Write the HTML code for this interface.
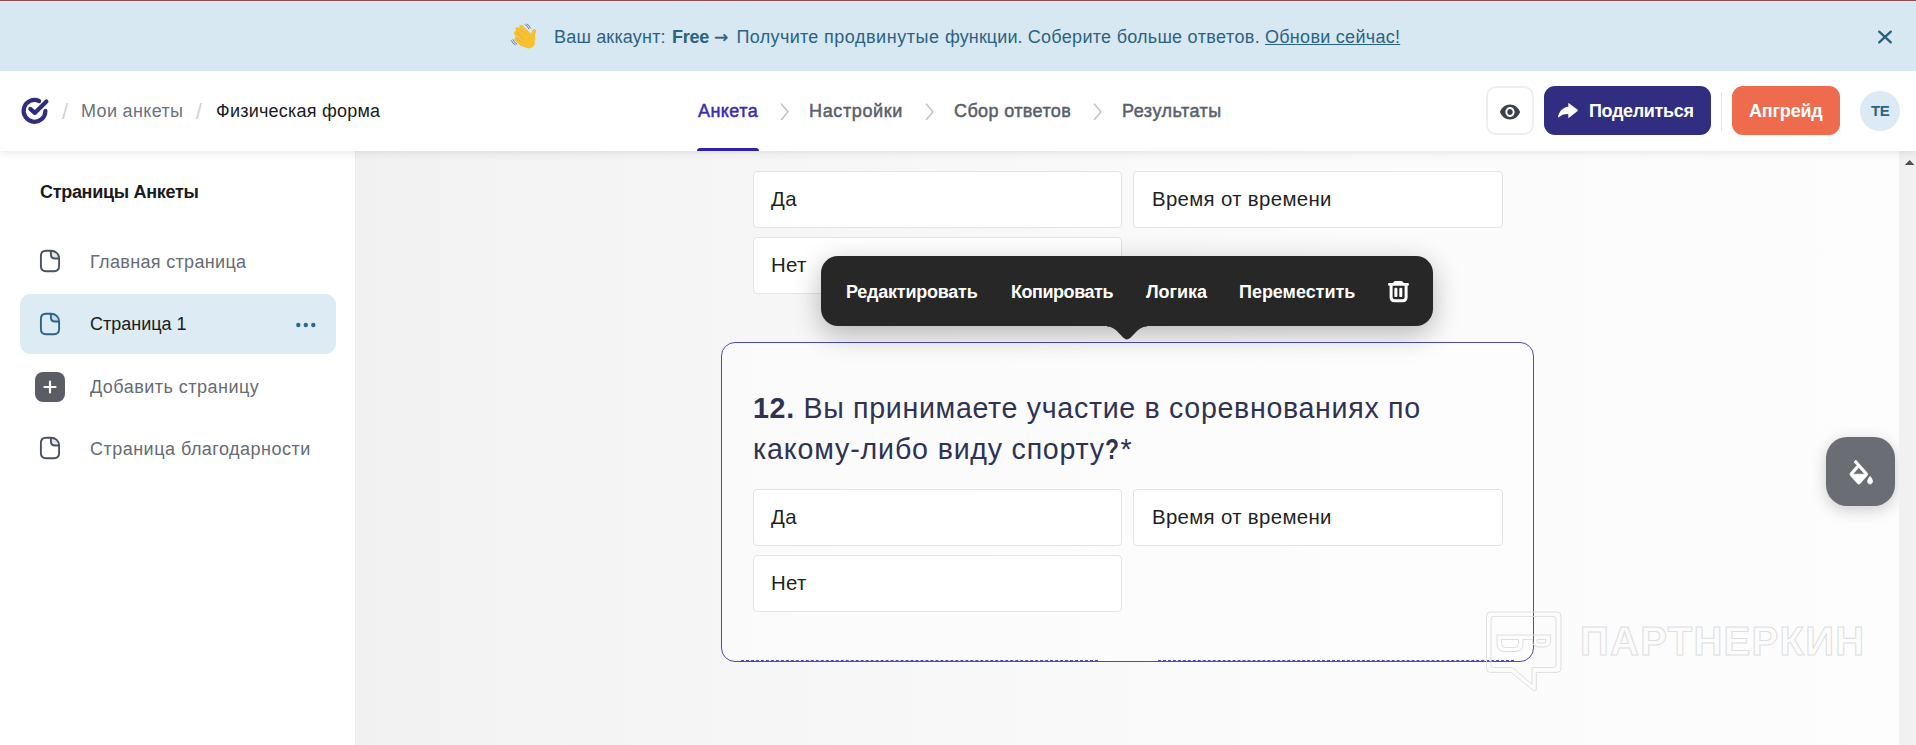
<!DOCTYPE html>
<html lang="ru">
<head>
<meta charset="utf-8">
<title>Физическая форма</title>
<style>
*{box-sizing:border-box;margin:0;padding:0}
html,body{width:1916px;height:745px;overflow:hidden;background:#fff}
body{font-family:"Liberation Sans",sans-serif;color:#1d1d26;position:relative}
.p{white-space:pre!important}.t{position:absolute;white-space:nowrap;line-height:22px;font-size:18px}
svg{position:absolute;overflow:visible}
/* banner */
#banner{position:absolute;left:0;top:0;width:1916px;height:71px;background:linear-gradient(180deg,#854f55 0,#854f55 1px,#fce0e6 1px,#fce0e6 2px,#e2e6ee 2px,#e2e6ee 3px,#d8e8f3 3px);z-index:6}
#banner .t{color:#2a6380;top:26px}
#banner b{font-weight:700}
/* header */
#header{position:absolute;left:0;top:71px;width:1916px;height:80px;background:#fff;box-shadow:0 2px 8px rgba(30,30,60,.10);z-index:5}
#header .t{top:29px}
.nav{color:#59606d;-webkit-text-stroke:.5px #59606d}
/* sidebar */
#side{position:absolute;left:0;top:151px;width:356px;height:594px;background:#fff;border-right:1px solid #ebebec}
#side .t{color:#666b74}
/* main */
#main{position:absolute;left:355px;top:151px;width:1544px;height:594px;background:linear-gradient(90deg,#f1f1f1 0%,#f5f5f5 18%,#f8f8f8 40%,#fbfbfb 65%,#fdfdfd 100%);overflow:hidden}
#scroll{position:absolute;left:1899px;top:151px;width:17px;height:594px;background:#f1f1f1}
.opt{position:absolute;height:57px;width:369px;background:#fff;border:1px solid #e3e3e6;border-radius:4px}
.opt .t{font-size:20.400px;line-height:24px;top:14.500px;left:17px;color:#1f1f1f}#o2,#o5{left:18px}
#tb{position:absolute;left:466px;top:105px;width:612px;height:70px;background:#272727;border-radius:17px;box-shadow:0 8px 28px rgba(0,0,0,.28)}
#tb .t{color:#fff;top:25px;font-weight:700}
#card{position:absolute;left:366px;top:191px;width:813px;height:320px;border:1px solid #4f48c4;border-radius:14px;background:rgba(255,255,255,.45)}
.q{position:absolute;font-size:28.600px;line-height:42px;color:#2e3354;white-space:nowrap}
/*LS*/#a1{letter-spacing:0.18px}#a2{letter-spacing:-0.28px}#a6{letter-spacing:0.28px}#h1{letter-spacing:0.34px}#h3{letter-spacing:0.23px}#n1{letter-spacing:0.43px}#n2{letter-spacing:0.64px}#n3{letter-spacing:0.38px}#n4{letter-spacing:0.5px}#hb1{letter-spacing:-0.34px}#hb2{letter-spacing:-0.18px}#hb3{letter-spacing:-.49px}#s0{letter-spacing:-0.3px}#s1{letter-spacing:0.33px}#s3{letter-spacing:0.48px}#s4{letter-spacing:0.48px}#o2{letter-spacing:.33px}#b1{letter-spacing:-0.24px}#b2{letter-spacing:-0.46px}#b3{letter-spacing:-0.04px}#b4{letter-spacing:-0.03px}#q1{letter-spacing:.68px}#o1,#o3,#o4,#o5,#o6{letter-spacing:.33px}#a4{letter-spacing:.32px}#a4b{letter-spacing:.53px}#a4c{letter-spacing:.11px}#a5{letter-spacing:.31px}#a5b{letter-spacing:.23px}#a5c{letter-spacing:.43px}#q2{letter-spacing:.85px}#q2b{letter-spacing:.76px}#q2c{letter-spacing:.75px}/*LS*/
</style>
</head>
<body>
<div id="main">
  <div class="opt" style="left:398px;top:20px"><span class="t" id="o1">Да</span></div>
  <div class="opt" style="left:778px;top:20px;width:369.600px"><span class="t" id="o2">Время от времени</span></div>
  <div class="opt" style="left:398px;top:86px"><span class="t" id="o3">Нет</span></div>
  <div id="card"></div>
  <div class="q" id="q1" style="left:398px;top:235.700px"><b>12.</b> Вы принимаете участие в соревнованиях по</div>
  <div class="q p" id="q2" style="left:398px;top:277.100px">какому-либо </div><div class="q p" id="q2b" style="left:582.700px;top:277.100px">виду </div><div class="q" id="q2c" style="left:656.600px;top:277.100px">спорту</div><div class="q" id="q2d" style="left:749.800px;top:277.100px;transform:scaleX(.8);transform-origin:0 0"><b>?</b></div><div class="q" id="q2e" style="left:765.600px;top:277.100px">*</div>
  <div class="opt" style="left:398px;top:338px"><span class="t" id="o4">Да</span></div>
  <div class="opt" style="left:778px;top:338px;width:369.600px"><span class="t" id="o5">Время от времени</span></div>
  <div class="opt" style="left:398px;top:404px"><span class="t" id="o6">Нет</span></div>
  <div style="position:absolute;left:386px;top:509px;width:357px;height:0;border-top:1px dashed #4f48c4"></div>
  <div style="position:absolute;left:803px;top:509px;width:356px;height:0;border-top:1px dashed #4f48c4"></div>
  <svg width="90" height="90" style="left:1125px;top:454px" viewBox="1480 605 90 90"><g fill="none" stroke="#dededf" stroke-width="1"><path d="M1490.500 612 H1557 Q1561 612 1561 616 V668.400 Q1561 672.400 1557 672.400 H1536.300 V688 Q1536.300 692.500 1533 690 L1511 672.400 H1490.500 Q1486.500 672.400 1486.500 668.400 V616 Q1486.500 612 1490.500 612Z"/><path d="M1493.500 616.400 H1553.500 Q1556 616.400 1556 619 V665 Q1556 667.500 1553.500 667.500 H1532 V684.400 L1512.500 667.500 H1493.500 Q1491 667.500 1491 665 V619 Q1491 616.400 1493.500 616.400Z"/><path d="M1497 635 H1550.600 V641 Q1550.600 647 1544 647 H1539 Q1532.600 647 1532.600 641 V639.500 H1523 V644 Q1523 651.500 1515 651.500 H1505 Q1497 651.500 1497 644Z"/><path d="M1501.500 639.500 H1518.500 V643.500 Q1518.500 647.500 1514.500 647.500 H1505.500 Q1501.500 647.500 1501.500 643.500Z"/><path d="M1537 639.500 H1546 V641 Q1546 643 1544 643 H1539 Q1537 643 1537 641Z"/></g></svg>
  <div id="wm" style="position:absolute;left:1225px;top:465px;font-size:40px;line-height:50px;font-weight:700;color:transparent;-webkit-text-stroke:1px #dededf;white-space:nowrap;letter-spacing:1.3px;transform-origin:0 0">ПАРТНЕРКИН</div>
  <div style="position:absolute;left:1471px;top:286px;width:69px;height:69px;border-radius:21px;background:#6a6d73;box-shadow:0 4px 16px rgba(0,0,0,.2)"></div>
  <svg width="22.600" height="24.400" style="left:1494.800px;top:308.800px" viewBox="3 0 18 17.200" preserveAspectRatio="none"><path fill="#fff" stroke="#fff" stroke-width=".500" fill-rule="evenodd" d="M16.560 8.940L7.620 0 6.210 1.410l2.380 2.380-5.150 5.150c-.59.59-.59 1.540 0 2.120l5.500 5.500c.29.29.68.440 1.060.440s.77-.15 1.060-.440l5.500-5.500c.59-.58.59-1.530 0-2.120zM5.210 10L10 5.210 14.790 10H5.210zM19 11.500s-2 2.170-2 3.500c0 1.100.9 2 2 2s2-.9 2-2c0-1.330-2-3.500-2-3.500z"/></svg>
  <div id="tb">
    <svg width="40" height="15" style="left:286px;top:69.500px" viewBox="0 0 40 15"><path d="M0 0 H40 V.500 C30 .500 25 13.400 20 13.400 C15 13.400 10 .500 0 .500Z" fill="#272727"/></svg>
    <svg width="24" height="24" style="left:566px;top:23.500px" viewBox="1387 280 24 24"><path d="M1393.100 283.500 Q1393.100 281 1395.600 281 H1401 Q1403.500 281 1403.500 283.500Z" fill="#fff"/><rect x="1388" y="282.900" width="20.900" height="2.800" rx="1.200" fill="#fff"/><path d="M1391.100 285 V297.200 Q1391.100 300.700 1394.600 300.700 H1402.600 Q1406.100 300.700 1406.100 297.200 V285" fill="none" stroke="#fff" stroke-width="3"/><rect x="1394.400" y="287.700" width="3" height="9.400" rx="1.200" fill="#fff"/><rect x="1399.300" y="287.700" width="3" height="9.400" rx="1.200" fill="#fff"/></svg>
    <span class="t" id="b1" style="left:25px">Редактировать</span>
    <span class="t" id="b2" style="left:190px">Копировать</span>
    <span class="t" id="b3" style="left:325px">Логика</span>
    <span class="t" id="b4" style="left:418px">Переместить</span>
  </div>
</div>
<div id="side">
  <span class="t" id="s0" style="left:40px;top:30px;color:#1a1a1a;font-weight:700">Страницы Анкеты</span>
  <span class="t" id="s1" style="left:90px;top:100px">Главная страница</span>
  <div style="position:absolute;left:20px;top:143px;width:316px;height:60px;border-radius:11px;background:#dcebf4"></div>
  <span class="t" id="s2" style="left:90px;top:162px;color:#1a1a1a">Страница 1</span>
  <svg width="22" height="24" style="left:39px;top:98.300px" viewBox="0 0 22 24"><path d="M11.900 1.700 V5.500 Q11.900 9.500 16 9.500 H20.100 C20.100 5 16.500 1.700 11.900 1.700Z" fill="#e3e6eb"/><path d="M11.900 1.700 H7 Q1.900 1.700 1.900 7 V17 Q1.900 22.200 7 22.200 H15 Q20.100 22.200 20.100 17 V9.500 C20.100 5 16.500 1.700 11.900 1.700 V5.500 Q11.900 9.500 16 9.500 H20.100" fill="none" stroke="#4a5160" stroke-width="1.900" stroke-linejoin="round"/></svg>
  <svg width="22" height="24" style="left:39px;top:160.600px" viewBox="0 0 22 24"><path d="M11.900 1.700 V5.500 Q11.900 9.500 16 9.500 H20.100 C20.100 5 16.500 1.700 11.900 1.700Z" fill="#c6dbe8"/><path d="M11.900 1.700 H7 Q1.900 1.700 1.900 7 V17 Q1.900 22.200 7 22.200 H15 Q20.100 22.200 20.100 17 V9.500 C20.100 5 16.500 1.700 11.900 1.700 V5.500 Q11.900 9.500 16 9.500 H20.100" fill="none" stroke="#2b6484" stroke-width="1.900" stroke-linejoin="round"/></svg>
  <svg width="22" height="24" style="left:39px;top:285.300px" viewBox="0 0 22 24"><path d="M11.900 1.700 V5.500 Q11.900 9.500 16 9.500 H20.100 C20.100 5 16.500 1.700 11.900 1.700Z" fill="#e3e6eb"/><path d="M11.900 1.700 H7 Q1.900 1.700 1.900 7 V17 Q1.900 22.200 7 22.200 H15 Q20.100 22.200 20.100 17 V9.500 C20.100 5 16.500 1.700 11.900 1.700 V5.500 Q11.900 9.500 16 9.500 H20.100" fill="none" stroke="#4a5160" stroke-width="1.900" stroke-linejoin="round"/></svg>
  <svg width="22" height="6" style="left:295px;top:171px" viewBox="0 0 22 6"><circle cx="3.300" cy="3" r="2.200" fill="#2d6a8a"/><circle cx="10.800" cy="3" r="2.200" fill="#2d6a8a"/><circle cx="18.300" cy="3" r="2.200" fill="#2d6a8a"/></svg>
  <div style="position:absolute;left:35px;top:221px;width:30px;height:30px;border-radius:8px;background:#5b5d66"></div>
  <svg width="30" height="30" style="left:35px;top:221px" viewBox="0 0 30 30"><path d="M15 9.500 V20.500 M9.500 15 H20.500" stroke="#fff" stroke-width="2.200" stroke-linecap="round"/></svg>
  <span class="t" id="s3" style="left:90px;top:225px">Добавить страницу</span>
  <span class="t" id="s4" style="left:90px;top:287px">Страница благодарности</span>
</div>
<div id="scroll"><svg width="17" height="17" style="left:0;top:0" viewBox="0 0 17 17"><path d="M5.900 14.100 L10.600 8.900 L15.300 14.100Z" fill="#505050"/></svg></div>
<div id="header">

  <svg width="30" height="30" style="left:19px;top:25px" viewBox="19 96 30 30"><path d="M45.4 110.9 A10.9 10.9 0 1 1 39.1 101" fill="none" stroke="#2f2d7e" stroke-width="4.2" stroke-linecap="round"/><path d="M30.3 108.9 L34.8 112.9 L46.4 101.6" fill="none" stroke="#2f2d7e" stroke-width="4.2" stroke-linecap="round" stroke-linejoin="round"/></svg>
  <svg width="10" height="18" style="left:780px;top:32px" viewBox="0 0 10 18"><path d="M1.5 1.2 L8 8.8 L1.5 16.4" fill="none" stroke="#bfc3cb" stroke-width="1.600" stroke-linecap="round" stroke-linejoin="round"/></svg>
  <svg width="10" height="18" style="left:924.5px;top:32px" viewBox="0 0 10 18"><path d="M1.5 1.2 L8 8.8 L1.5 16.4" fill="none" stroke="#bfc3cb" stroke-width="1.600" stroke-linecap="round" stroke-linejoin="round"/></svg>
  <svg width="10" height="18" style="left:1092.5px;top:32px" viewBox="0 0 10 18"><path d="M1.5 1.2 L8 8.8 L1.5 16.4" fill="none" stroke="#bfc3cb" stroke-width="1.600" stroke-linecap="round" stroke-linejoin="round"/></svg>
  <span class="t" style="left:62px;top:30.300px;font-size:22.200px;color:#d0d3da" id="h0">/</span>
  <span class="t" style="left:81px;color:#6b7280" id="h1">Мои анкеты</span>
  <span class="t" style="left:195.700px;top:30.300px;font-size:22.200px;color:#d0d3da" id="h2">/</span>
  <span class="t" style="left:216px;color:#1a1a24" id="h3">Физическая форма</span>
  <span class="t nav" style="left:698px;color:#3a2bb3;-webkit-text-stroke-color:#3a2bb3" id="n1">Анкета</span>
  <div style="position:absolute;left:697px;top:77px;width:62px;height:3px;background:#2e21ae;border-radius:3px 3px 0 0"></div>
  <span class="t nav" style="left:809px" id="n2">Настройки</span>
  <span class="t nav" style="left:954px" id="n3">Сбор ответов</span>
  <span class="t nav" style="left:1122px" id="n4">Результаты</span>
  <div style="position:absolute;left:1485.500px;top:15px;width:48px;height:49px;border:2px solid #eeeef1;border-radius:10px"></div>
  <div style="position:absolute;left:1544px;top:15px;width:167px;height:49px;border-radius:11px;background:#312e81"></div>
  <span class="t" style="left:1589px;color:#fff;font-weight:700" id="hb1">Поделиться</span>
  <div style="position:absolute;left:1721px;top:21px;width:1px;height:39px;background:#e6e6ea"></div>
  <div style="position:absolute;left:1732px;top:15px;width:108px;height:49px;border-radius:11px;background:#ee6b4d"></div>
  <span class="t" style="left:1749px;color:#fff;font-weight:700" id="hb2">Апгрейд</span>
  <div style="position:absolute;left:1860px;top:20px;width:40px;height:40px;border-radius:50%;background:#dbeaf4"></div>
  <span class="t" style="left:1871px;color:#2b6484;font-weight:700;font-size:15px;top:29px" id="hb3">TE</span>
  <svg width="22" height="24" style="left:1498.9px;top:28.5px" viewBox="0 0 24 24" preserveAspectRatio="none"><path fill="#3c424b" fill-rule="evenodd" d="M12 4.5C7 4.5 2.73 7.61 1 12c1.73 4.39 6 7.500 11 7.500s9.270-3.110 11-7.500c-1.730-4.390-6-7.500-11-7.500zM12 17c-2.760 0-5-2.240-5-5s2.240-5 5-5 5 2.240 5 5-2.240 5-5 5zm0-8c-1.660 0-3 1.340-3 3s1.340 3 3 3 3-1.340 3-3-1.340-3-3-3z"/></svg>
  <svg width="24" height="20" style="left:1556px;top:30px" viewBox="1556 101 24 20"><path fill="#fff" d="M1558 117 C1559.300 111.200 1563 107.200 1568.300 106.800 V103.800 Q1568.300 102.600 1569.300 103.400 L1577.600 109.800 Q1578.200 110.400 1577.600 111 L1569.300 117.600 Q1568.300 118.400 1568.300 117.200 V113.900 C1563.500 113.900 1561 115 1558.800 117.300 Q1558.200 117.800 1558 117Z"/></svg>
</div>
<div id="banner">

  <svg width="50" height="40" style="left:500px;top:16px" viewBox="0 0 50 40">
    <g fill="none" stroke-linecap="round">
      <path d="M25.2 8.6 q2.6 1.2 3.6 4.2 M26.8 7.9 q2.6 1.2 3.6 4.2" stroke="#63788a" stroke-width=".9"/>
      <path d="M11.3 24.6 q1.2 3 4 4.300 M12.9 23.800 q1.200 3 4 4.300" stroke="#63788a" stroke-width=".9"/>
      <g stroke="#f6c02f" stroke-width="3.900">
        <path d="M21.300 10.900 L29.500 19"/><path d="M17.300 13 L26.500 22"/><path d="M15.700 17.200 L24 25.200"/><path d="M16.200 23.200 L22 28.400"/>
        <path d="M34.200 15 Q32.200 19 33.500 23"/>
      </g>
    </g>
    <path d="M22 26 L28.500 17.500 L32 20 Q35.500 24 34.800 28 Q33.500 32.200 28 32.400 Q24 32 20.500 28.500 Z" fill="#f6c02f"/>
    <path d="M19.500 12 L27 19.500 M16 15.200 L24 23 M15.500 20.600 L21.800 26.400" stroke="#e2a21f" stroke-width=".7" fill="none"/>
  </svg>
  <svg width="16" height="16" style="left:1877.100px;top:28.500px" viewBox="0 0 16 16"><path d="M2.200 2.600 L13.800 13.400 M13.800 2.600 L2.200 13.400" stroke="#28607c" stroke-width="2.300" fill="none" stroke-linecap="round"/></svg>
  <span class="t" id="a1" style="left:554px">Ваш аккаунт:</span>
  <span class="t" id="a2" style="left:672px"><b>Free</b></span>
  <span class="t" id="a3" style="left:714px;font-family:'DejaVu Sans',sans-serif;font-size:17px;-webkit-text-stroke:.3px #2a6380">→</span>
  <span class="t p" id="a4" style="left:736.600px">Получите </span><span class="t p" id="a4b" style="left:824px">продвинутые </span><span class="t" id="a4c" style="left:945px">функции.</span>
  <span class="t p" id="a5" style="left:1027.700px">Соберите </span><span class="t p" id="a5b" style="left:1116.700px">больше </span><span class="t" id="a5c" style="left:1187.600px">ответов.</span>
  <span class="t" id="a6" style="left:1265px"><u>Обнови сейчас!</u></span>
</div>
</body>
</html>
